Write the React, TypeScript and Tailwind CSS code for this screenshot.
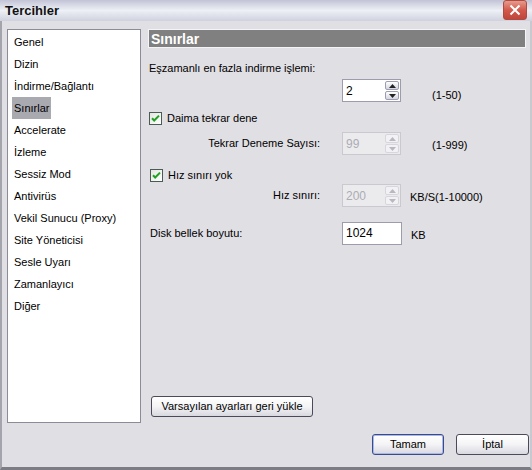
import React from "react";

const items = [
  "Genel",
  "Dizin",
  "İndirme/Bağlantı",
  "Sınırlar",
  "Accelerate",
  "İzleme",
  "Sessiz Mod",
  "Antivirüs",
  "Vekil Sunucu (Proxy)",
  "Site Yöneticisi",
  "Sesle Uyarı",
  "Zamanlayıcı",
  "Diğer",
];

const Arrow = ({ up, disabled }: { up?: boolean; disabled?: boolean }) => (
  <div
    className={`flex-1 flex items-center justify-center rounded-[2px] border ${
      disabled
        ? "border-[#d6d6dc] bg-[#f2f2f4]"
        : "border-[#9d9db0] bg-gradient-to-b from-white to-[#d4d6e2]"
    }`}
  >
    <svg width="7" height="4" viewBox="0 0 7 4">
      <path
        d={up ? "M0 4 L3.5 0 L7 4 Z" : "M0 0 L3.5 4 L7 0 Z"}
        fill={disabled ? "#b8b8c0" : "#222"}
      />
    </svg>
  </div>
);

const Spinner = ({ value, disabled }: { value: string; disabled?: boolean }) => (
  <div
    className={`w-[59px] h-[23px] flex border ${
      disabled ? "border-[#c9c9cf] bg-[#ebebee]" : "border-[#9c9cae] bg-white"
    }`}
  >
    <div className={`flex-1 pl-[3px] pt-[4px] text-[12px] leading-[14px] ${disabled ? "text-[#acacb4]" : "text-black"}`}>
      {value}
    </div>
    <div className="w-[16px] flex flex-col gap-[1px] p-[1px]">
      <Arrow up disabled={disabled} />
      <Arrow disabled={disabled} />
    </div>
  </div>
);

const Check = () => (
  <svg width="13" height="13" viewBox="0 0 13 13">
    <defs>
      <linearGradient id="cb" x1="0" y1="0" x2="1" y2="1">
        <stop offset="0" stopColor="#e4e4e0" />
        <stop offset="1" stopColor="#ffffff" />
      </linearGradient>
    </defs>
    <rect x="0.5" y="0.5" width="12" height="12" fill="url(#cb)" stroke="#4b5a54" />
    <path d="M3 6.2 L5.2 8.5 L10 3.6" fill="none" stroke="#21a121" strokeWidth="2" />
  </svg>
);

const XpButton = ({ label, w, primary }: { label: string; w: string; primary?: boolean }) => (
  <button
    className={`${w} h-[21px] rounded-[3px] border ${
      primary ? "border-[#3a4a8a] shadow-[inset_0_0_0_1px_#a8b8e8]" : "border-[#4a4a5a]"
    } bg-gradient-to-b from-white via-[#f4f4f6] to-[#d8d8e0] text-[11px] text-black leading-none`}
  >
    {label}
  </button>
);

export default function App() {
  return (
    <div className="w-[532px] h-[470px] flex flex-col bg-[#e0dfe4] font-['Liberation_Sans',Arial,sans-serif] text-[11px] leading-[13px] text-black overflow-hidden">
      {/* Title bar */}
      <div className="h-[21px] flex items-center justify-between bg-gradient-to-b from-[#c2c4d6] via-[#eef0f6] to-[#cfd1de] pl-[5px] pr-[5px]">
        <span className="text-[13px] leading-[16px] font-bold text-[#111]">Tercihler</span>
        <div className="w-[24px] h-[20px] -mt-[1px] rounded-[3px] border border-[#b04a40] bg-gradient-to-b from-[#e69a8e] via-[#d2594c] to-[#c0443a] flex items-center justify-center">
          <svg width="12" height="12" viewBox="0 0 12 12">
            <path d="M1.5 1.5 L10.5 10.5 M10.5 1.5 L1.5 10.5" stroke="white" strokeWidth="2" />
          </svg>
        </div>
      </div>

      {/* Body */}
      <div className="flex-1 flex flex-col border-l-2 border-r-2 border-b-[3px] border-l-[#a4a4ac] border-r-[#c8c8d0] border-b-[#7c7c84] pl-[5px] pt-[8px]">
        <div className="h-[394px] flex">
          {/* Category list */}
          <div className="w-[134px] border border-[#8c8c98] bg-white pt-[1px] pl-[4px]">
            {items.map((it) => (
              <div key={it} className="h-[22px] flex">
                <span
                  className={`px-[2px] flex items-center ${it === "Sınırlar" ? "bg-[#a9a9b0]" : ""}`}
                >
                  {it}
                </span>
              </div>
            ))}
          </div>

          {/* Settings panel */}
          <div className="ml-[7px] w-[378px] flex flex-col">
            <div className="h-[19px] border border-[#f4f4f6] bg-[#808080] pl-[2px] flex items-center">
              <span className="text-[14px] leading-[16px] font-bold text-white">Sınırlar</span>
            </div>

            <div className="mt-[14px] pl-[1px] h-[13px]">Eşzamanlı en fazla indirme işlemi:</div>

            <div className="mt-[4px] h-[23px] flex items-start">
              <div className="ml-[194px]">
                <Spinner value="2" />
              </div>
              <span className="ml-[31px] mt-[10px]">(1-50)</span>
            </div>

            <div className="mt-[10px] pl-[1px] h-[13px] flex items-center gap-[5px]">
              <Check />
              <span>Daima tekrar dene</span>
            </div>

            <div className="mt-[7px] flex items-center">
              <span className="w-[172px] text-right">Tekrar Deneme Sayısı:</span>
              <div className="ml-[22px]">
                <Spinner value="99" disabled />
              </div>
              <span className="ml-[31px] mt-[4px]">(1-999)</span>
            </div>

            <div className="mt-[14px] pl-[2px] h-[13px] flex items-center gap-[5px]">
              <Check />
              <span>Hız sınırı yok</span>
            </div>

            <div className="mt-[2px] flex items-center">
              <span className="w-[172px] text-right">Hız sınırı:</span>
              <div className="ml-[22px]">
                <Spinner value="200" disabled />
              </div>
              <span className="ml-[9px] mt-[4px]">KB/S(1-10000)</span>
            </div>

            <div className="mt-[15px] flex items-center">
              <span className="w-[194px] pl-[2px]">Disk bellek boyutu:</span>
              <div className="w-[60px] h-[23px] border border-[#9c9cae] bg-white pl-[3px] pt-[3px] text-[12px] leading-[14px]">1024</div>
              <span className="ml-[9px] mt-[3px]">KB</span>
            </div>

            <div className="mt-auto mb-[6px] ml-[3px]">
              <XpButton label="Varsayılan ayarları geri yükle" w="w-[162px]" />
            </div>
          </div>
        </div>

        {/* Dialog buttons */}
        <div className="mt-[11px] flex justify-end gap-[12px] pr-[1px]">
          <XpButton label="Tamam" w="w-[72px]" primary />
          <XpButton label="İptal" w="w-[73px]" />
        </div>
      </div>
    </div>
  );
}
